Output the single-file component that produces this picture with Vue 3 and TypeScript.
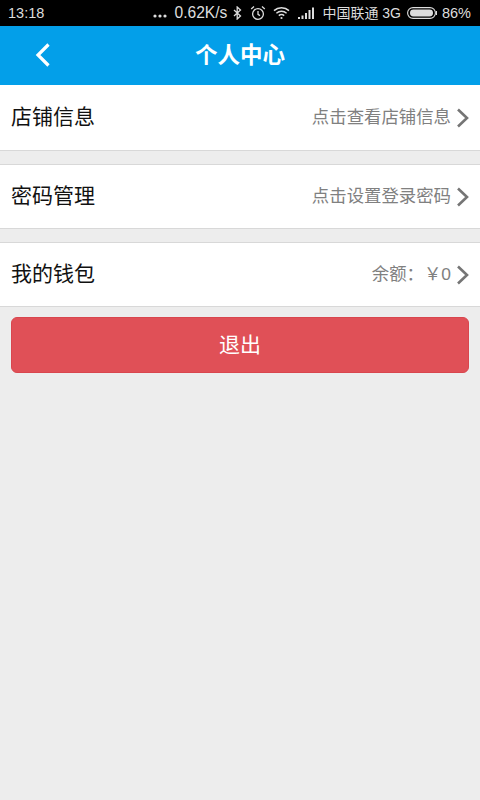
<script setup lang="ts">
interface Row { title: string; hint: string }
const rows: Row[] = [
  { title: '店铺信息', hint: '点击查看店铺信息' },
  { title: '密码管理', hint: '点击设置登录密码' },
  { title: '我的钱包', hint: '余额：￥0' },
]
</script>

<template>
  <div class="page">
    <div class="status">
      <span class="time">13:18</span>
      <div class="status-right">
        <svg class="ic dots" width="14" height="4" viewBox="0 0 14 4" fill="#ddd">
          <circle cx="2" cy="2" r="1.6" />
          <circle cx="7" cy="2" r="1.6" />
          <circle cx="12" cy="2" r="1.6" />
        </svg>
        <span class="speed">0.62K/s</span>
        <svg class="ic bt" width="9" height="14" viewBox="0 0 9 14" fill="none" stroke="#ddd" stroke-width="1.3">
          <path d="M1 4l6.5 6L4.2 13V1l3.3 3L1 10" />
        </svg>
        <svg class="ic alarm" width="16" height="16" viewBox="0 0 16 16" fill="none" stroke="#ddd" stroke-width="1.3">
          <circle cx="8" cy="9" r="5.4" />
          <path d="M8 6v3.4l2 1.2M1.2 4L4 1.6M14.8 4L12 1.6" />
        </svg>
        <svg class="ic wifi" width="17" height="14" viewBox="0 0 17 14" fill="none" stroke="#ddd" stroke-width="1.5">
          <path d="M1 4.6c4.2-3.8 10.8-3.8 15 0M3.4 7.2c2.9-2.5 7.3-2.5 10.2 0M5.8 9.6c1.6-1.3 3.8-1.3 5.4 0" />
          <circle cx="8.5" cy="12" r="1.1" fill="#ddd" stroke="none" />
        </svg>
        <svg class="ic signal" width="18" height="12" viewBox="0 0 18 12" fill="#ddd">
          <rect x="0" y="10" width="2" height="2" />
          <rect x="3.5" y="8.5" width="2" height="3.5" />
          <rect x="7" y="6" width="2" height="6" />
          <rect x="10.5" y="3" width="2" height="9" />
          <rect x="14" y="0.5" width="2" height="11.5" />
        </svg>
        <span class="carrier">中国联通 3G</span>
        <svg class="ic battery" width="30" height="12" viewBox="0 0 30 12">
          <rect x="0.6" y="0.6" width="27.8" height="10.8" rx="5.4" fill="none" stroke="#ddd" stroke-width="1.1" />
          <rect x="3" y="2.6" width="23" height="6.8" rx="3.4" fill="#ddd" />
          <rect x="28.8" y="4" width="1.2" height="4" fill="#ddd" />
        </svg>
        <span class="pct">86%</span>
      </div>
    </div>

    <header class="bar">
      <svg class="back" width="18" height="26" viewBox="0 0 18 26" fill="none" stroke="#fff" stroke-width="3.2">
        <path d="M14.5 2.5L4 13l10.5 10.5" />
      </svg>
      <h1 class="title">个人中心</h1>
    </header>

    <div class="list">
      <div v-for="row in rows" :key="row.title" class="row">
        <span class="row-title">{{ row.title }}</span>
        <span class="row-hint">{{ row.hint }}</span>
        <svg class="chev" width="13" height="20" viewBox="0 0 13 20" fill="none" stroke="#757575" stroke-width="2.6">
          <path d="M2 1.5L11 10l-9 8.5" />
        </svg>
      </div>
    </div>

    <button class="logout" type="button"><span class="logout-label">退出</span></button>
  </div>
</template>

<style scoped>
.page {
  width: 480px;
  height: 800px;
  background: #ededed;
  font-family: "Liberation Sans", "Noto Sans CJK SC", sans-serif;
  overflow: hidden;
}
.status {
  height: 26px;
  background: #000;
  color: #ddd;
  display: flex;
  align-items: center;
  justify-content: space-between;
  padding: 0 9px 0 8px;
  font-size: 14.5px;
}
.status-right {
  display: flex;
  align-items: center;
}
.dots { margin-top: 5px; margin-right: 8px; }
.speed { font-size: 15.6px; }
.ic { flex: none; }
.bt { margin-left: 6px; }
.alarm { margin-left: 8px; }
.wifi { margin-left: 7px; }
.signal { margin-left: 8px; }
.carrier { margin-left: 6px; font-size: 14px; padding-bottom: 2px; }
.battery { margin-left: 6px; }
.pct { margin-left: 5px; }
.bar {
  height: 59px;
  background: #039fe9;
  display: grid;
  grid-template-columns: 1fr auto 1fr;
  align-items: center;
}
.back {
  margin-left: 34px;
  margin-top: -1px;
}
.title {
  margin: 0;
  padding-bottom: 5px;
  color: #fff;
  font-size: 22.5px;
  font-weight: 700;
}
.list {
  display: flex;
  flex-direction: column;
  gap: 13px;
}
.row {
  height: 65px;
  box-sizing: border-box;
  background: #fff;
  border-bottom: 1px solid #d8d8d8;
  display: flex;
  align-items: center;
  padding: 0 11px;
}
.row:first-child {
  height: 66px;
}
.row + .row {
  border-top: 1px solid #d8d8d8;
}
.row-title {
  flex: 1;
  font-size: 21px;
  color: #111;
  padding-bottom: 6px;
}
.row-hint {
  font-size: 17.4px;
  color: #808080;
  padding-bottom: 4px;
}
.chev {
  margin-left: 5px;
  margin-top: 1px;
}
.logout {
  display: block;
  margin: 10px 11px 0;
  width: 458px;
  height: 56px;
  border: 1px solid #d9464e;
  border-radius: 6px;
  background: #e05057;
  color: #fff;
  font-family: inherit;
  font-size: 21px;
}
.logout-label {
  display: block;
  padding-bottom: 4px;
}
</style>
